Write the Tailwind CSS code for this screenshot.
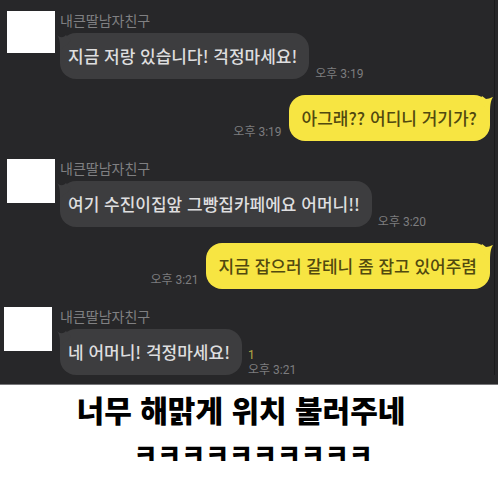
<!DOCTYPE html>
<html lang="ko">
<head>
    <meta charset="UTF-8">
    <meta name="viewport" content="width=device-width, initial-scale=1.0">
    <title>너무 해맑게 위치 불러주네</title>
    <script src="https://cdn.jsdelivr.net/npm/@tailwindcss/browser@4"></script>
</head>
<body class="min-h-screen bg-white font-['Noto_Sans_CJK_KR',sans-serif]">

    <!-- 채팅 화면 -->
    <main class="bg-[#272729] pb-[9px] border-b border-[#77777a]">
        <div class="flex flex-col pt-[11px] pl-[7px] mr-[3px] pr-1 border-r border-[#1b1b1c]">

            <!-- 받은 메시지 -->
            <section class="flex items-start">
                <div class="w-12 h-[42px] shrink-0 bg-white"></div>
                <div class="ml-[5px]">
                    <h2 class="h-[22px] text-[14px] leading-[18px] text-[#808082]">내큰딸남자친구</h2>
                    <div class="flex items-end gap-[6px]">
                        <p class="relative rounded-2xl bg-[#3d3d3f] pl-2 pr-3 text-[17px] leading-[46px] font-medium text-[#dededf] whitespace-nowrap">
                            <svg class="absolute -left-[3px] top-[2px] w-4 h-4" viewBox="0 0 16 16" fill="#3d3d3f"><path d="M0 0C3 3 6 3 9 0L14 6L3 15C3 8 3 4 0 0Z"/></svg>
                            <span class="relative">지금 저랑 있습니다! 걱정마세요!</span>
                        </p>
                        <time class="font-[Roboto,'Noto_Sans_CJK_KR',sans-serif] text-[12px] leading-[10px] text-[#7d7d7f] whitespace-nowrap">오후 3:19</time>
                    </div>
                </div>
            </section>

            <!-- 보낸 메시지 -->
            <section class="mt-4 flex items-end justify-end gap-[7px]">
                <time class="font-[Roboto,'Noto_Sans_CJK_KR',sans-serif] text-[12px] leading-[18px] text-[#7d7d7f] whitespace-nowrap">오후 3:19</time>
                <p class="relative rounded-2xl bg-[#f7e542] px-[13px] text-[17px] leading-[46px] font-medium text-[#51490f] whitespace-nowrap">
                    <svg class="absolute -right-[3px] top-[1px] w-4 h-4" viewBox="0 0 16 16" fill="#f7e542"><path d="M16 1C13 2 11 3 9 3L5 0L2 6L13 16C13 8 14 4 16 1Z"/></svg>
                    <span class="relative">아그래?? 어디니 거기가?</span>
                </p>
            </section>

            <section class="mt-[18px] flex items-start">
                <div class="w-12 h-[44px] shrink-0 bg-white"></div>
                <div class="ml-[5px]">
                    <h2 class="h-[22px] text-[14px] leading-[18px] text-[#808082]">내큰딸남자친구</h2>
                    <div class="flex items-end gap-[6px]">
                        <p class="relative rounded-2xl bg-[#3d3d3f] pl-2 pr-3 text-[17px] leading-[46px] font-medium text-[#dededf] whitespace-nowrap">
                            <svg class="absolute -left-[3px] top-[2px] w-4 h-4" viewBox="0 0 16 16" fill="#3d3d3f"><path d="M0 0C3 3 6 3 9 0L14 6L3 15C3 8 3 4 0 0Z"/></svg>
                            <span class="relative">여기 수진이집앞 그빵집카페에요 어머니!!</span>
                        </p>
                        <time class="font-[Roboto,'Noto_Sans_CJK_KR',sans-serif] text-[12px] leading-[10px] text-[#7d7d7f] whitespace-nowrap">오후 3:20</time>
                    </div>
                </div>
            </section>

            <section class="mt-4 flex items-end justify-end gap-[7px]">
                <time class="font-[Roboto,'Noto_Sans_CJK_KR',sans-serif] text-[12px] leading-[18px] text-[#7d7d7f] whitespace-nowrap">오후 3:21</time>
                <p class="relative rounded-2xl bg-[#f7e542] px-[13px] text-[17px] leading-[46px] font-medium text-[#51490f] whitespace-nowrap">
                    <svg class="absolute -right-[3px] top-[1px] w-4 h-4" viewBox="0 0 16 16" fill="#f7e542"><path d="M16 1C13 2 11 3 9 3L5 0L2 6L13 16C13 8 14 4 16 1Z"/></svg>
                    <span class="relative">지금 잡으러 갈테니 좀 잡고 있어주렴</span>
                </p>
            </section>

            <section class="mt-[18px] flex items-start">
                <div class="-ml-[3px] mr-[3px] w-12 h-[44px] shrink-0 bg-white"></div>
                <div class="ml-[5px]">
                    <h2 class="h-[22px] text-[14px] leading-[18px] text-[#808082]">내큰딸남자친구</h2>
                    <div class="flex items-end gap-[6px]">
                        <p class="relative rounded-2xl bg-[#3d3d3f] pl-2 pr-3 text-[17px] leading-[46px] font-medium text-[#dededf] whitespace-nowrap">
                            <svg class="absolute -left-[3px] top-[2px] w-4 h-4" viewBox="0 0 16 16" fill="#3d3d3f"><path d="M0 0C3 3 6 3 9 0L14 6L3 15C3 8 3 4 0 0Z"/></svg>
                            <span class="relative">네 어머니! 걱정마세요!</span>
                        </p>
                        <div class="flex flex-col gap-[5px] font-[Roboto,'Noto_Sans_CJK_KR',sans-serif] text-[12px] leading-[10px] text-[#7d7d7f] whitespace-nowrap">
                            <span class="text-[#b5a945]">1</span>
                            <time>오후 3:21</time>
                        </div>
                    </div>
                </div>
            </section>
        </div>
    </main>

    <!-- 자막 -->
    <footer class="pt-[2px] text-center font-black text-black">
        <p class="pr-4 text-[30px] leading-[44px]">너무 해맑게 위치 불러주네</p>
        <p class="pl-2 text-[26px] leading-[44px]">ㅋㅋㅋㅋㅋㅋㅋㅋㅋㅋ</p>
    </footer>

</body>
</html>
